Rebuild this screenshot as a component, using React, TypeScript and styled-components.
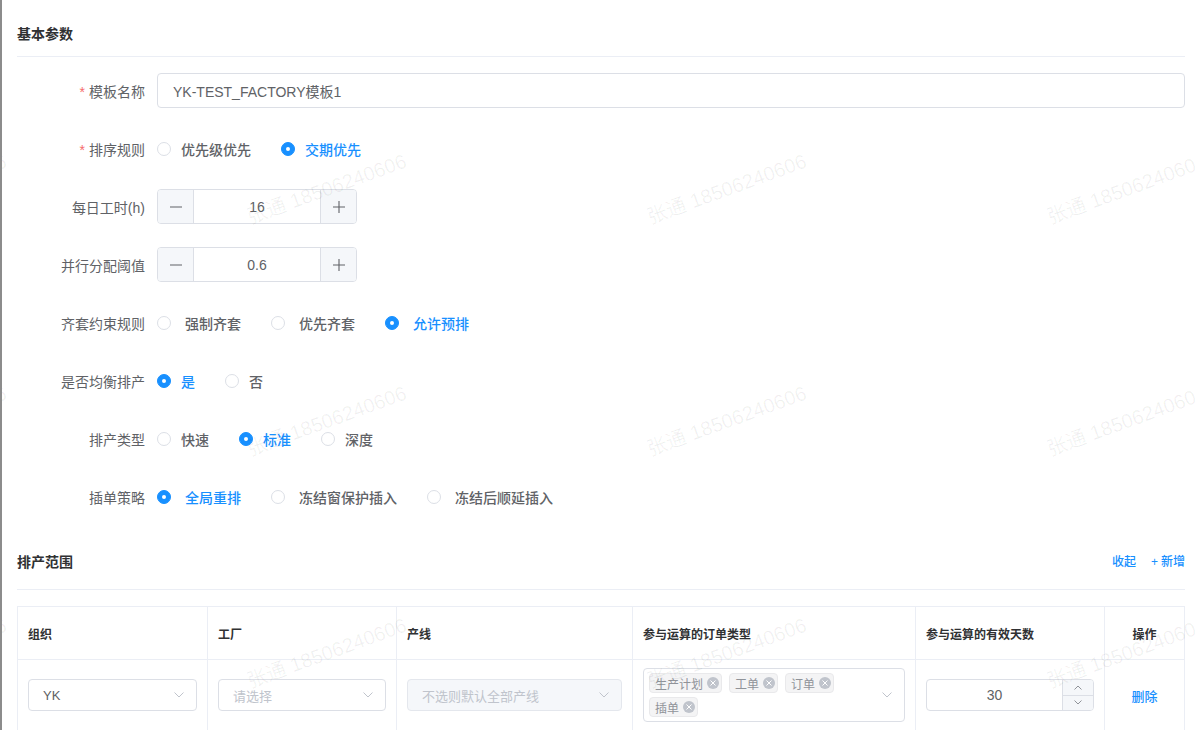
import styled, { createGlobalStyle } from 'styled-components';

const BLUE = '#1890ff';

const GlobalStyle = createGlobalStyle`
  html, body {
    margin: 0;
    padding: 0;
    overflow: hidden;
    background: #fff;
  }
  body {
    font-family: "Liberation Sans", "Noto Sans CJK SC", sans-serif;
    color: #606266;
  }
  * {
    box-sizing: border-box;
  }
`;

const Page = styled.div`
  position: relative;
  height: 730px;
  overflow: hidden;
  border-left: 2px solid #8c8c8c;
  padding: 0 10px 0 15px;
`;

const SectionHeader = styled.div<{ $top: number; $pt: number; $pb: number }>`
  display: flex;
  align-items: center;
  justify-content: space-between;
  margin-top: ${(p) => p.$top}px;
  padding: ${(p) => p.$pt}px 0 ${(p) => p.$pb}px;
  border-bottom: 1px solid #ebeef5;
`;

const Title = styled.div`
  font-size: 14px;
  line-height: 20px;
  font-weight: 700;
  color: #303133;
`;

const Actions = styled.div`
  display: flex;
  align-items: center;
  gap: 15px;

  span {
    font-size: 12px;
    line-height: 20px;
    font-weight: 500;
    color: ${BLUE};
    cursor: pointer;
  }
  .plus {
    margin-right: 3px;
  }
`;

const Form = styled.div`
  display: flex;
  flex-direction: column;
  gap: 23px;
  padding-top: 16px;
`;

const FormRow = styled.div`
  display: flex;
  align-items: center;
  height: 35px;
`;

const Label = styled.div`
  width: 140px;
  flex-shrink: 0;
  padding-right: 12px;
  text-align: right;
  font-size: 14px;
  color: #606266;

  .req {
    color: #f56c6c;
    margin-right: 4px;
  }
`;

const TextInput = styled.input`
  flex: 1;
  height: 35px;
  border: 1px solid #dcdfe6;
  border-radius: 4px;
  padding: 0 15px;
  font-family: inherit;
  font-size: 14px;
  color: #606266;
  background: transparent;
  outline: none;
`;

const RadioGroup = styled.div`
  display: flex;
  align-items: center;
`;

const RadioItem = styled.label`
  display: inline-flex;
  align-items: center;
  margin-right: 30px;
  cursor: pointer;
`;

const RadioDot = styled.span<{ $on: boolean }>`
  position: relative;
  width: 14px;
  height: 14px;
  border-radius: 50%;
  border: 1px solid ${(p) => (p.$on ? BLUE : '#dcdfe6')};
  background: ${(p) => (p.$on ? BLUE : '#fff')};

  &::after {
    content: '';
    display: ${(p) => (p.$on ? 'block' : 'none')};
    position: absolute;
    left: 50%;
    top: 50%;
    width: 4px;
    height: 4px;
    margin: -2px 0 0 -2px;
    border-radius: 50%;
    background: #fff;
  }
`;

const RadioText = styled.span<{ $on: boolean; $pad: number }>`
  padding-left: ${(p) => p.$pad}px;
  font-size: 14px;
  font-weight: 500;
  color: ${(p) => (p.$on ? BLUE : '#606266')};
`;

const Stepper = styled.div`
  display: flex;
  width: 200px;
  height: 35px;
  border: 1px solid #dcdfe6;
  border-radius: 4px;
  overflow: hidden;
`;

const StepButton = styled.div<{ $side: 'left' | 'right' }>`
  width: 36px;
  display: flex;
  align-items: center;
  justify-content: center;
  background: #f5f7fa;
  ${(p) => (p.$side === 'left' ? 'border-right' : 'border-left')}: 1px solid #dcdfe6;
`;

const StepValue = styled.div`
  flex: 1;
  display: flex;
  align-items: center;
  justify-content: center;
  font-size: 14px;
  color: #606266;
`;

const Table = styled.table`
  width: 100%;
  margin-top: 16px;
  border-collapse: collapse;
  table-layout: fixed;

  th,
  td {
    border: 1px solid #ebeef5;
    padding: 0 10px;
    vertical-align: middle;
  }
  th {
    height: 53px;
    font-size: 12px;
    font-weight: 700;
    color: #303133;
    text-align: left;
  }
  td {
    padding: 8px 10px;
    font-size: 13px;
  }
  .center {
    text-align: center;
  }
`;

const Select = styled.div<{ $disabled?: boolean; $placeholder?: boolean }>`
  display: flex;
  align-items: center;
  justify-content: space-between;
  height: 32px;
  padding: 0 12px 0 14px;
  border: 1px solid ${(p) => (p.$disabled ? '#e4e7ed' : '#dcdfe6')};
  border-radius: 4px;
  background: ${(p) => (p.$disabled ? '#f5f7fa' : 'transparent')};
  font-size: 13px;
  color: ${(p) => (p.$placeholder ? '#c0c4cc' : '#606266')};
`;

const MultiSelect = styled.div`
  display: flex;
  align-items: center;
  min-height: 53px;
  padding: 4px 12px 4px 5px;
  border: 1px solid #dcdfe6;
  border-radius: 4px;
`;

const TagList = styled.div`
  flex: 1;
  display: flex;
  flex-wrap: wrap;
  gap: 4px 7px;
  padding-right: 12px;
`;

const Tag = styled.span`
  display: inline-flex;
  align-items: center;
  height: 20px;
  padding: 0 2px 0 5px;
  border: 1px solid #e9e9eb;
  border-radius: 4px;
  background: #f4f4f5;
  font-size: 12px;
  color: #909399;
`;

const TagClose = styled.span`
  display: inline-flex;
  align-items: center;
  justify-content: center;
  width: 12px;
  height: 12px;
  margin-left: 4px;
  border-radius: 50%;
  background: #c0c4cc;
`;

const DaysInput = styled.div`
  display: flex;
  height: 32px;
  border: 1px solid #dcdfe6;
  border-radius: 4px;
  overflow: hidden;
`;

const DaysValue = styled.div`
  flex: 1;
  display: flex;
  align-items: center;
  justify-content: center;
  font-size: 14px;
  color: #606266;
`;

const DaysSteps = styled.div`
  width: 31px;
  display: flex;
  flex-direction: column;
  border-left: 1px solid #dcdfe6;
  background: #f5f7fa;

  div {
    flex: 1;
    display: flex;
    align-items: center;
    justify-content: center;
  }
  div + div {
    border-top: 1px solid #dcdfe6;
  }
`;

const LinkText = styled.span`
  color: ${BLUE};
  font-weight: 500;
  cursor: pointer;
`;

const Watermarks = styled.div`
  position: absolute;
  left: -276px;
  top: 71px;
  display: grid;
  grid-template-columns: repeat(4, 400px);
  grid-auto-rows: 232px;
  pointer-events: none;

  span {
    display: flex;
    align-items: center;
    justify-content: center;
    white-space: nowrap;
    font-size: 20px;
    color: rgba(0, 0, 0, 0.06);
    transform: rotate(-20deg);
  }
`;

const Chevron = ({ up = false, w = 10, color = '#c0c4cc' }: { up?: boolean; w?: number; color?: string }) => (
  <svg width={w} height={w / 2 + 1} viewBox={`0 0 ${w} ${w / 2 + 1}`}>
    <polyline
      points={up ? `0.5,${w / 2 + 0.5} ${w / 2},1 ${w - 0.5},${w / 2 + 0.5}` : `0.5,0.5 ${w / 2},${w / 2} ${w - 0.5},0.5`}
      fill="none"
      stroke={color}
      strokeWidth="1"
    />
  </svg>
);

const Minus = () => (
  <svg width="14" height="14" viewBox="0 0 14 14">
    <line x1="1" y1="7" x2="13" y2="7" stroke="#606266" strokeWidth="1.1" />
  </svg>
);

const Plus = () => (
  <svg width="14" height="14" viewBox="0 0 14 14">
    <line x1="1" y1="7" x2="13" y2="7" stroke="#606266" strokeWidth="1.1" />
    <line x1="7" y1="1" x2="7" y2="13" stroke="#606266" strokeWidth="1.1" />
  </svg>
);

const CloseX = () => (
  <svg width="6" height="6" viewBox="0 0 6 6">
    <path d="M0.5 0.5 L5.5 5.5 M5.5 0.5 L0.5 5.5" stroke="#fff" strokeWidth="1" />
  </svg>
);

type Option = { label: string; on?: boolean };

const Radios = ({ options, pad }: { options: Option[]; pad: number }) => (
  <RadioGroup>
    {options.map((o) => (
      <RadioItem key={o.label}>
        <RadioDot $on={!!o.on} />
        <RadioText $on={!!o.on} $pad={pad}>
          {o.label}
        </RadioText>
      </RadioItem>
    ))}
  </RadioGroup>
);

const NumberStepper = ({ value }: { value: string }) => (
  <Stepper>
    <StepButton $side="left">
      <Minus />
    </StepButton>
    <StepValue>{value}</StepValue>
    <StepButton $side="right">
      <Plus />
    </StepButton>
  </Stepper>
);

const radioRows: { label: string; pad: number; options: Option[] }[] = [
  { label: '齐套约束规则', pad: 14, options: [{ label: '强制齐套' }, { label: '优先齐套' }, { label: '允许预排', on: true }] },
  { label: '是否均衡排产', pad: 10, options: [{ label: '是', on: true }, { label: '否' }] },
  { label: '排产类型', pad: 10, options: [{ label: '快速' }, { label: '标准', on: true }, { label: '深度' }] },
  {
    label: '插单策略',
    pad: 14,
    options: [{ label: '全局重排', on: true }, { label: '冻结窗保护插入' }, { label: '冻结后顺延插入' }],
  },
];

const orderTypes = ['生产计划', '工单', '订单', '插单'];

const App = () => {
  return (
    <>
      <GlobalStyle />
      <Page>
        <SectionHeader $top={0} $pt={24} $pb={12}>
          <Title>基本参数</Title>
        </SectionHeader>

        <Form>
          <FormRow>
            <Label>
              <span className="req">*</span>模板名称
            </Label>
            <TextInput readOnly value="YK-TEST_FACTORY模板1" />
          </FormRow>
          <FormRow>
            <Label>
              <span className="req">*</span>排序规则
            </Label>
            <Radios pad={10} options={[{ label: '优先级优先' }, { label: '交期优先', on: true }]} />
          </FormRow>
          <FormRow>
            <Label>每日工时(h)</Label>
            <NumberStepper value="16" />
          </FormRow>
          <FormRow>
            <Label>并行分配阈值</Label>
            <NumberStepper value="0.6" />
          </FormRow>
          {radioRows.map((r) => (
            <FormRow key={r.label}>
              <Label>{r.label}</Label>
              <Radios pad={r.pad} options={r.options} />
            </FormRow>
          ))}
        </Form>

        <SectionHeader $top={38} $pt={0} $pb={17}>
          <Title>排产范围</Title>
          <Actions>
            <span>收起</span>
            <span>
              <span className="plus">+</span>新增
            </span>
          </Actions>
        </SectionHeader>

        <Table>
          <colgroup>
            <col style={{ width: 190 }} />
            <col style={{ width: 189 }} />
            <col style={{ width: 236 }} />
            <col style={{ width: 283 }} />
            <col style={{ width: 189 }} />
            <col />
          </colgroup>
          <thead>
            <tr>
              <th>组织</th>
              <th>工厂</th>
              <th>产线</th>
              <th>参与运算的订单类型</th>
              <th>参与运算的有效天数</th>
              <th className="center">操作</th>
            </tr>
          </thead>
          <tbody>
            <tr>
              <td>
                <Select>
                  YK
                  <Chevron />
                </Select>
              </td>
              <td>
                <Select $placeholder>
                  请选择
                  <Chevron />
                </Select>
              </td>
              <td>
                <Select $disabled $placeholder>
                  不选则默认全部产线
                  <Chevron />
                </Select>
              </td>
              <td>
                <MultiSelect>
                  <TagList>
                    {orderTypes.map((t) => (
                      <Tag key={t}>
                        {t}
                        <TagClose>
                          <CloseX />
                        </TagClose>
                      </Tag>
                    ))}
                  </TagList>
                  <Chevron />
                </MultiSelect>
              </td>
              <td>
                <DaysInput>
                  <DaysValue>30</DaysValue>
                  <DaysSteps>
                    <div>
                      <Chevron up w={8} color="#909399" />
                    </div>
                    <div>
                      <Chevron w={8} color="#909399" />
                    </div>
                  </DaysSteps>
                </DaysInput>
              </td>
              <td className="center">
                <LinkText>删除</LinkText>
              </td>
            </tr>
          </tbody>
        </Table>

        <Watermarks>
          {Array.from({ length: 12 }).map((_, i) => (
            <span key={i}>张通 18506240606</span>
          ))}
        </Watermarks>
      </Page>
    </>
  );
};

export default App;
